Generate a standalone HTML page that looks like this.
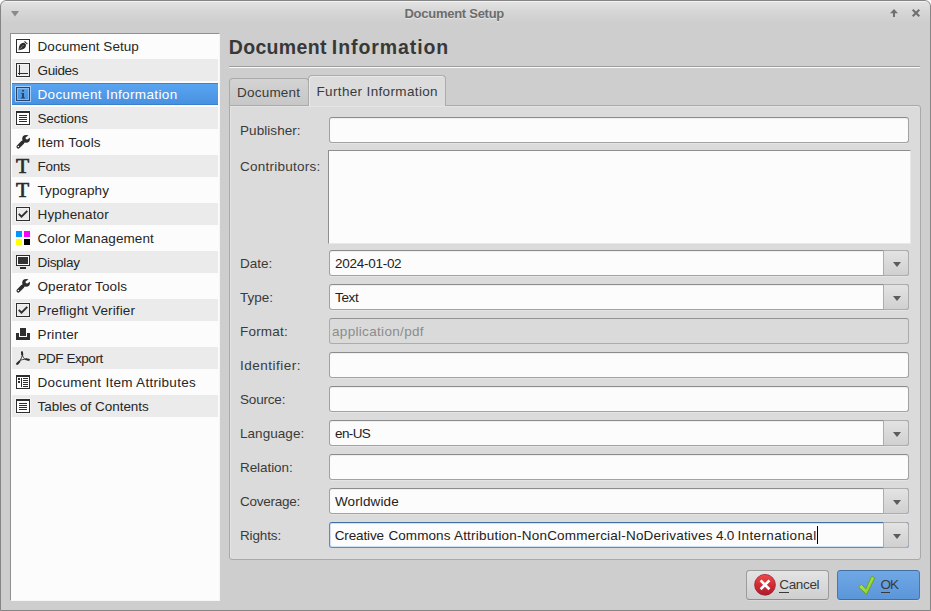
<!DOCTYPE html>
<html><head><meta charset="utf-8"><title>Document Setup</title>
<style>
*{box-sizing:border-box;margin:0;padding:0}
html,body{width:931px;height:611px;overflow:hidden;background:#fff}
body{font-family:"Liberation Sans",sans-serif;font-size:13.5px;color:#3a3a3a;position:relative}
#win{position:absolute;left:0;top:0;width:931px;height:611px;background:#cecece;border-radius:6px 6px 0 0;overflow:hidden}
#win:after{content:"";box-sizing:border-box;position:absolute;left:0;top:0;width:931px;height:611px;border:1px solid #858585;border-radius:6px 6px 0 0;pointer-events:none}
#tb{position:absolute;left:0;top:0;width:931px;height:27px;background:linear-gradient(#f3f3f3 0,#f3f3f3 2px,#e2e2e2 2px,#d6d6d6 12px,#cecece 23px)}
#tb .t{position:absolute;left:404.5px;top:6.4px;line-height:15px;font-weight:bold;color:#6c6c6c;font-size:13px;letter-spacing:-.27px;white-space:nowrap;text-shadow:0 1px 0 rgba(255,255,255,.45)}
.abs{position:absolute}
#list{position:absolute;left:10px;top:33px;width:210px;height:568px;background:#fcfcfc;border:1px solid #909090;border-right-color:#f6f6f6;border-bottom-color:#f6f6f6}
.it{color:#262626;position:absolute;left:1px;width:206px;height:22px;margin-top:1px;line-height:23px;padding-left:25.5px;white-space:nowrap;letter-spacing:.35px}
.it.alt{background:#ebebeb}
.it.sel{background:linear-gradient(#5ba6f3,#4690df);color:#fff;box-shadow:inset 0 1px 0 #3583de,inset 0 -1px 0 #3a80d2}
.it svg{position:absolute;left:3px;top:3px;width:16px;height:16px}
h1{position:absolute;left:229.5px;top:35px;width:300px;height:24px;font-size:19.5px;font-weight:bold;color:#383838;white-space:pre;line-height:24px}
h1 span{position:absolute;top:0}
.hr{position:absolute;left:229px;top:66px;width:691px;height:2px;border-top:1px solid #9d9d9d;border-bottom:1px solid #fafafa}
.tab{position:absolute;text-align:center;white-space:nowrap;border:1px solid #ababab;border-bottom:none;border-radius:4px 4px 0 0;letter-spacing:.3px}
#pane{position:absolute;left:229px;top:105px;width:692px;height:455px;background:#dbdbdb;border:1px solid #a9a9a9;border-radius:0 3px 3px 3px;box-shadow:inset 1px 1px 0 #e4e4e4}
.lb{position:absolute;left:240px;height:26px;line-height:28px;white-space:nowrap;letter-spacing:.25px}
.in{position:absolute;left:329px;width:580px;height:26px;background:#fcfcfc;border:1px solid #a2a2a2;border-top-color:#8c8c8c;border-radius:3px;line-height:26px;padding-left:5px;white-space:nowrap;letter-spacing:.17px;color:#222;box-shadow:inset 0 1px 1px rgba(0,0,0,.06),0 1px 0 rgba(255,255,255,.25)}
.in.dis{background:#dadada;color:#8c8c8c;border-color:#929292 #acacac #acacac;box-shadow:none;padding-left:2px}
.in.foc{border-color:#3f6fa8 #4a8fdd #4a8fdd;box-shadow:inset 0 0 0 1px rgba(74,143,221,.25)}
.caret{position:absolute;left:487px;top:3px;width:1px;height:18px;background:#000}
.w{position:absolute;top:0;white-space:pre}
.cb{position:absolute;right:-1px;top:-1px;width:26px;height:26px;border:1px solid #adadad;border-radius:0 3px 3px 0;background:linear-gradient(#e3e3e3,#d0d0d0)}
.cb:after{content:"";position:absolute;left:9px;top:11px;border:4px solid transparent;border-top:5px solid #5c5c5c;border-bottom:none}
.ta{position:absolute;left:328px;top:150px;width:583px;height:94px;background:#fcfcfc;border:1px solid #8f8f8f;border-right-color:#e8e8e8;border-bottom-color:#e8e8e8}
.btn{position:absolute;top:570px;height:30px;border:1px solid #9c9c9c;border-bottom-color:#8e8e8e;border-radius:3.5px;background:linear-gradient(#e4e4e4,#cfcfcf);line-height:28px;white-space:nowrap;box-shadow:0 1px 0 rgba(255,255,255,.2)}
.btn u{text-decoration:none;border-bottom:1px solid currentColor;display:inline-block;line-height:14px}
</style></head><body>
<div id="win">
<div id="tb"><div class="t">Document Setup</div>
<svg class="abs" style="left:11px;top:11px" width="10" height="7"><path d="M0 0h8l-4 5.6z" fill="#8a8a8a"/></svg>
<svg class="abs" style="left:889px;top:8px" width="10" height="10"><path d="M5 1L9 5.3H6V9H4V5.3H1z" fill="#707070"/></svg>
<svg class="abs" style="left:911px;top:8px" width="10" height="10"><path d="M1.7 1.7l6.6 6.6M8.3 1.7l-6.6 6.6" stroke="#6e6e6e" stroke-width="2" fill="none"/></svg>
</div>
<div id="list">
<div class="it" style="top:0px;letter-spacing:0.06px"><svg viewBox="0 0 16 16" ><rect x=".5" y=".5" width="15" height="15" fill="none" stroke="#fff" stroke-opacity=".5"/><rect x="1.5" y="1.5" width="13" height="13" fill="#fff" stroke="#2d2d2d"/><rect x="2.5" y="2.5" width="11" height="11" fill="none" stroke="#fff" stroke-opacity=".3"/><g transform="translate(7.6 8.1) rotate(45)"><path d="M0 5.7C-1.5 3.9-2.9 1.9-2.9 .1C-2.9-1.5-2-2.8-1.2-3.6h2.4C2-2.8 2.9-1.5 2.9 .1C2.9 1.9 1.5 3.9 0 5.7z" fill="#2d2d2d"/><path d="M0 4.8V-1" stroke="#fff" stroke-width=".7" stroke-dasharray="1 .6"/><path d="M-2-4.7h4" stroke="#2d2d2d" stroke-width="1.1"/></g></svg><span>Document Setup</span></div>
<div class="it alt" style="top:24px;letter-spacing:-0.35px"><svg viewBox="0 0 16 16" ><rect x=".5" y=".5" width="15" height="15" fill="none" stroke="#fff" stroke-opacity=".5"/><rect x="1.5" y="1.5" width="13" height="13" fill="none" stroke="#2d2d2d"/><rect x="2.5" y="2.5" width="11" height="11" fill="none" stroke="#fff" stroke-opacity=".3"/><path d="M4.5 3v10M3 11.5h10" stroke="#2d2d2d" fill="none"/></svg><span>Guides</span></div>
<div class="it sel" style="top:48px;letter-spacing:0.36px"><svg viewBox="0 0 16 16" ><rect x=".5" y=".5" width="15" height="15" fill="none" stroke="#fff" stroke-opacity=".5"/><rect x="1.5" y="1.5" width="13" height="13" fill="none" stroke="#2b4466"/><rect x="2.5" y="2.5" width="11" height="11" fill="none" stroke="#fff" stroke-opacity=".3"/><path d="M7 4h2v1.6h-2zM6.3 7h2.7v4.4h1v1h-4v-1h1v-3.4h-.7z" fill="#2b4466"/></svg><span>Document Information</span></div>
<div class="it alt" style="top:72px;letter-spacing:-0.2px"><svg viewBox="0 0 16 16" ><rect x="1" y="1" width="14" height="14" fill="#fff"/><rect x=".5" y=".5" width="15" height="15" fill="none" stroke="#fff" stroke-opacity=".5"/><rect x="1.5" y="1.5" width="13" height="13" fill="none" stroke="#2d2d2d"/><rect x="2.5" y="2.5" width="11" height="11" fill="none" stroke="#fff" stroke-opacity=".3"/><path d="M1 2h14M4 5.5h8M4 7.5h8M4 9.5h8M4 11.5h8" stroke="#2d2d2d" fill="none"/><path d="M1 2h14" stroke="#2d2d2d" stroke-width="2"/></svg><span>Sections</span></div>
<div class="it" style="top:96px;letter-spacing:0.2px"><svg viewBox="0 0 16 16" ><mask id="wm1"><rect width="16" height="16" fill="#fff"/><path d="M11.9 4.1L16.5 1.1" stroke="#000" stroke-width="2.7" stroke-linecap="round"/></mask><path d="M3.3 12.7L7.6 8.4" stroke="#2d2d2d" stroke-width="3.7" stroke-linecap="round" fill="none"/><path d="M7 9L9.5 6.5" stroke="#2d2d2d" stroke-width="2.2" fill="none"/><circle cx="11.1" cy="4.8" r="3.9" fill="#2d2d2d" mask="url(#wm1)"/><circle cx="3.4" cy="12.5" r=".75" fill="#fff"/></svg><span>Item Tools</span></div>
<div class="it alt" style="top:120px;letter-spacing:-0.25px"><svg viewBox="0 0 16 16" ><text x="7.5" y="15" text-anchor="middle" font-family="Liberation Serif, serif" font-size="21.5" fill="#2d2d2d" stroke="#2d2d2d" stroke-width=".7">T</text></svg><span>Fonts</span></div>
<div class="it" style="top:144px;letter-spacing:0.1px"><svg viewBox="0 0 16 16" ><text x="7.5" y="15" text-anchor="middle" font-family="Liberation Serif, serif" font-size="21.5" fill="#2d2d2d" stroke="#2d2d2d" stroke-width=".7">T</text></svg><span>Typography</span></div>
<div class="it alt" style="top:168px;letter-spacing:0.16px"><svg viewBox="0 0 16 16" ><rect x=".5" y=".5" width="15" height="15" fill="none" stroke="#fff" stroke-opacity=".5"/><rect x="1.5" y="1.5" width="13" height="13" fill="none" stroke="#2d2d2d"/><rect x="2.5" y="2.5" width="11" height="11" fill="none" stroke="#fff" stroke-opacity=".3"/><path d="M3.8 7.8l2.7 2.8 5.8-5.8" stroke="#2d2d2d" stroke-width="1.9" fill="none"/></svg><span>Hyphenator</span></div>
<div class="it" style="top:192px;letter-spacing:0.1px"><svg viewBox="0 0 16 16" ><rect x="0" y="0" width="16" height="16" fill="#fff" opacity=".0"/><rect x="1" y="1" width="6" height="6" fill="#0096ff"/><rect x="9" y="1" width="6" height="6" fill="#ff00ff"/><rect x="1" y="9" width="6" height="6" fill="#ffff00"/><rect x="9" y="9" width="6" height="6" fill="#000"/></svg><span>Color Management</span></div>
<div class="it alt" style="top:216px;letter-spacing:-0.3px"><svg viewBox="0 0 16 16" ><rect x="1.5" y="1.5" width="13" height="10" fill="#fff" stroke="#2d2d2d"/><rect x="3" y="3" width="10" height="7" fill="#333"/><rect x="5" y="13" width="6" height="2" fill="#2d2d2d"/></svg><span>Display</span></div>
<div class="it" style="top:240px;letter-spacing:0.09px"><svg viewBox="0 0 16 16" ><mask id="wm2"><rect width="16" height="16" fill="#fff"/><path d="M11.9 4.1L16.5 1.1" stroke="#000" stroke-width="2.7" stroke-linecap="round"/></mask><path d="M3.3 12.7L7.6 8.4" stroke="#2d2d2d" stroke-width="3.7" stroke-linecap="round" fill="none"/><path d="M7 9L9.5 6.5" stroke="#2d2d2d" stroke-width="2.2" fill="none"/><circle cx="11.1" cy="4.8" r="3.9" fill="#2d2d2d" mask="url(#wm2)"/><circle cx="3.4" cy="12.5" r=".75" fill="#fff"/></svg><span>Operator Tools</span></div>
<div class="it alt" style="top:264px;letter-spacing:0.13px"><svg viewBox="0 0 16 16" ><rect x=".5" y=".5" width="15" height="15" fill="none" stroke="#fff" stroke-opacity=".5"/><rect x="1.5" y="1.5" width="13" height="13" fill="none" stroke="#2d2d2d"/><rect x="2.5" y="2.5" width="11" height="11" fill="none" stroke="#fff" stroke-opacity=".3"/><path d="M3.8 7.8l2.7 2.8 5.8-5.8" stroke="#2d2d2d" stroke-width="1.9" fill="none"/></svg><span>Preflight Verifier</span></div>
<div class="it" style="top:288px;letter-spacing:0.18px"><svg viewBox="0 0 16 16" ><path d="M5 2h6v8h-6zM1 7h3v4h8v-4h3v7h-14z" fill="#2d2d2d"/></svg><span>Printer</span></div>
<div class="it alt" style="top:312px;letter-spacing:-0.45px"><svg viewBox="0 0 16 16" ><g fill="none" stroke="#2d2d2d" stroke-linecap="round"><path d="M7 2.2C7 5 8 7.5 9.6 8.8C11 9.6 12.5 9.8 14 9.8" stroke-width=".9"/><path d="M13.8 9.8C11 9 8 9.2 5.6 10.2C4 11.5 3 13 2 14" stroke-width=".9"/><path d="M2.2 13.8C4.5 12 6.5 8.5 7.2 5.5C7.4 4 7.2 3 7 2.2" stroke-width=".9"/><path d="M7 2.3C7 3 7.1 3.8 7.3 4.6" stroke-width="2"/><path d="M13.8 9.8C13 9.6 12 9.4 11.2 9.3" stroke-width="2"/><path d="M2.2 13.8C2.8 13.2 3.6 12.5 4.3 11.6" stroke-width="2.2"/></g></svg><span>PDF Export</span></div>
<div class="it" style="top:336px;letter-spacing:0.29px"><svg viewBox="0 0 16 16" ><rect x="1" y="1" width="14" height="14" fill="#fff"/><rect x=".5" y=".5" width="15" height="15" fill="none" stroke="#fff" stroke-opacity=".5"/><rect x="1.5" y="1.5" width="13" height="13" fill="none" stroke="#2d2d2d"/><rect x="2.5" y="2.5" width="11" height="11" fill="none" stroke="#fff" stroke-opacity=".3"/><path d="M1 2h14" stroke="#2d2d2d" stroke-width="2"/><path d="M3 4h2v2h-2zM3 7h2v2h-2z" fill="#2d2d2d"/><path d="M6.5 4v9M8 4.5h5M8 6.5h5M8 8.5h5M8 10.5h5M8 12.5h5" stroke="#2d2d2d" fill="none"/></svg><span>Document Item Attributes</span></div>
<div class="it alt" style="top:360px;letter-spacing:-0.03px"><svg viewBox="0 0 16 16" ><rect x="1" y="1" width="14" height="14" fill="#fff"/><rect x=".5" y=".5" width="15" height="15" fill="none" stroke="#fff" stroke-opacity=".5"/><rect x="1.5" y="1.5" width="13" height="13" fill="none" stroke="#2d2d2d"/><rect x="2.5" y="2.5" width="11" height="11" fill="none" stroke="#fff" stroke-opacity=".3"/><path d="M1 2h14M4 5.5h8M4 7.5h8M4 9.5h8M4 11.5h8" stroke="#2d2d2d" fill="none"/><path d="M1 2h14" stroke="#2d2d2d" stroke-width="2"/></svg><span>Tables of Contents</span></div>
</div>
<h1><span style="left:-.8px;letter-spacing:.34px">Document </span><span style="left:102.3px;letter-spacing:.92px">Information</span></h1>
<div class="hr"></div>
<div class="tab" style="left:229px;top:78px;width:80px;height:27px;line-height:27px;background:linear-gradient(#d3d3d3,#c7c7c7);text-align:left;padding-left:7px;letter-spacing:.22px">Document</div>
<div id="pane"></div>
<div class="tab" style="left:308px;top:75px;width:138px;height:31px;line-height:31px;background:#dcdcdc;box-shadow:inset 1px 1px 0 #e9e9e9;text-align:left;padding-left:7.5px;letter-spacing:.35px">Further Information</div>
<div class="lb" style="top:153px">Contributors:</div><div class="ta"></div>
<div class="lb" style="top:117px;letter-spacing:0.06px">Publisher:</div>
<div class="in" style="top:117px"></div>
<div class="lb" style="top:250px;letter-spacing:-0.02px">Date:</div>
<div class="in cbx" style="top:250px"><span class="v" style="letter-spacing:-0.27px">2024-01-02</span><div class="cb"></div></div>
<div class="lb" style="top:284px;letter-spacing:-0.02px">Type:</div>
<div class="in cbx" style="top:284px"><span class="v" style="letter-spacing:-0.36px">Text</span><div class="cb"></div></div>
<div class="lb" style="top:318px;letter-spacing:0.2px">Format:</div>
<div class="in dis" style="top:318px"><span class="v" style="letter-spacing:0.32px">application/pdf</span></div>
<div class="lb" style="top:352px;letter-spacing:0.5px">Identifier:</div>
<div class="in" style="top:352px"></div>
<div class="lb" style="top:386px;letter-spacing:-0.18px">Source:</div>
<div class="in" style="top:386px"></div>
<div class="lb" style="top:420px;letter-spacing:0.05px">Language:</div>
<div class="in cbx" style="top:420px"><span class="v" style="letter-spacing:-0.6px">en-US</span><div class="cb"></div></div>
<div class="lb" style="top:454px;letter-spacing:-0.07px">Relation:</div>
<div class="in" style="top:454px"></div>
<div class="lb" style="top:488px;letter-spacing:-0.25px">Coverage:</div>
<div class="in cbx" style="top:488px"><span class="v" style="letter-spacing:0.11px">Worldwide</span><div class="cb"></div></div>
<div class="lb" style="top:522px;letter-spacing:-0.13px">Rights:</div>
<div class="in cbx foc" style="top:522px"><span class="w" style="left:4.76px;letter-spacing:-0.13px">Creative </span><span class="w" style="left:58.46px;letter-spacing:0.08px">Commons </span><span class="w" style="left:123.95px;letter-spacing:0.21px">Attribution-NonCommercial-NoDerivatives </span><span class="w" style="left:386.1px;letter-spacing:-0.35px">4.0 </span><span class="w" style="left:407.45px;letter-spacing:0.375px">International </span><i class="caret"></i><div class="cb"></div></div>
<div class="btn" style="left:746px;width:83px"><svg class="abs" style="left:6px;top:2px" width="24" height="24" viewBox="0 0 24 24"><defs><linearGradient id="gr" x1="0" y1="0" x2="0" y2="1"><stop offset="0" stop-color="#ee4a4a"/><stop offset=".55" stop-color="#cf2a32"/><stop offset="1" stop-color="#a81c30"/></linearGradient></defs><circle cx="12" cy="11.8" r="10.4" fill="url(#gr)" stroke="#a3202c" stroke-width=".8"/><path d="M7.6 7.4l8.8 8.8M16.4 7.4l-8.8 8.8" stroke="#fff" stroke-width="2.7" fill="none"/></svg><span class="abs" style="left:32.3px;letter-spacing:-.35px"><u>C</u>ancel</span></div>
<div class="btn" style="left:837px;width:83px;background:linear-gradient(#70a8e6,#5b96d9);border-color:#41709f #4577b3 #3f6ea5"><svg class="abs" style="left:19px;top:3px" width="22" height="24" viewBox="0 0 22 24"><defs><linearGradient id="gg" x1="0" y1="0" x2="1" y2="1"><stop offset="0" stop-color="#c4f06a"/><stop offset="1" stop-color="#7cc420"/></linearGradient></defs><path d="M1.6 12.9L4.4 10.4L8.9 15L14.6 2.3L17.8 3.8L9.6 20.5z" fill="url(#gg)" stroke="#62a418" stroke-width=".9" stroke-linejoin="round"/></svg><span class="abs" style="left:42.6px;letter-spacing:-1.1px"><u>O</u>K</span></div>
</div>
</body></html>
